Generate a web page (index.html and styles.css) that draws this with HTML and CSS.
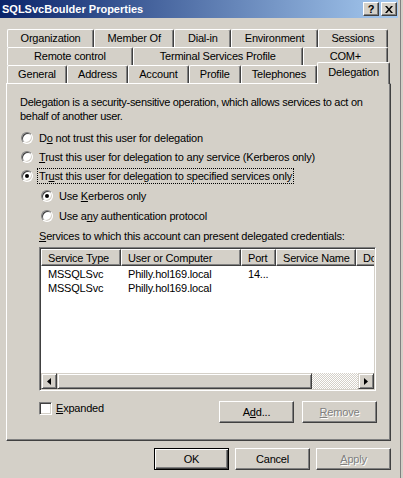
FILE: index.html
```html
<!DOCTYPE html>
<html lang="en">
<head>
    <meta charset="UTF-8">
    <title>SQLSvcBoulder Properties</title>
    <link rel="stylesheet" href="styles.css">
</head>
<body>
    <div class="window">
        <div class="titlebar">
            <span class="title">SQLSvcBoulder Properties</span>
            <div class="caption-buttons">
                <span class="cap-btn">?</span>
                <span class="cap-btn">
                    <svg width="8" height="7" viewBox="0 0 8 7"><path d="M0 0h2l2 2.5 2-2.5h2l-3 3.5 3 3.5h-2l-2-2.5-2 2.5h-2l3-3.5z" fill="#000"/></svg>
                </span>
            </div>
        </div>

        <div class="dialog">
            <div class="tab-row">
                <div class="tab">Organization</div>
                <div class="tab">Member Of</div>
                <div class="tab">Dial-in</div>
                <div class="tab">Environment</div>
                <div class="tab">Sessions</div>
            </div>
            <div class="tab-row">
                <div class="tab">Remote control</div>
                <div class="tab">Terminal Services Profile</div>
                <div class="tab">COM+</div>
            </div>
            <div class="tab-row">
                <div class="tab">General</div>
                <div class="tab">Address</div>
                <div class="tab">Account</div>
                <div class="tab">Profile</div>
                <div class="tab">Telephones</div>
                <div class="tab active">Delegation</div>
            </div>

            <div class="panel">
                <p class="intro">Delegation is a security-sensitive operation, which allows services to act on behalf of another user.</p>

                <div class="option first">
                    <span class="radio"></span>
                    <span class="label">D<u>o</u> not trust this user for delegation</span>
                </div>
                <div class="option">
                    <span class="radio"></span>
                    <span class="label"><u>T</u>rust this user for delegation to any service (Kerberos only)</span>
                </div>
                <div class="option">
                    <span class="radio checked"></span>
                    <span class="label focus">Tr<u>u</u>st this user for delegation to specified services only</span>
                </div>
                <div class="option sub">
                    <span class="radio checked"></span>
                    <span class="label">Use <u>K</u>erberos only</span>
                </div>
                <div class="option sub">
                    <span class="radio"></span>
                    <span class="label">Use a<u>n</u>y authentication protocol</span>
                </div>

                <div class="services">
                    <div class="services-label"><u>S</u>ervices to which this account can present delegated credentials:</div>
                    <div class="listview">
                        <div class="lv-header">
                            <div class="col c1">Service Type</div>
                            <div class="col c2">User or Computer</div>
                            <div class="col c3">Port</div>
                            <div class="col c4">Service Name</div>
                            <div class="col c5">Dc</div>
                        </div>
                        <div class="lv-body">
                            <div class="lv-row">
                                <div class="cell c1">MSSQLSvc</div>
                                <div class="cell c2">Philly.hol169.local</div>
                                <div class="cell c3">14...</div>
                                <div class="cell c4"></div>
                            </div>
                            <div class="lv-row">
                                <div class="cell c1">MSSQLSvc</div>
                                <div class="cell c2">Philly.hol169.local</div>
                                <div class="cell c3"></div>
                                <div class="cell c4"></div>
                            </div>
                        </div>
                        <div class="hscroll">
                            <span class="sb-btn">
                                <svg width="4" height="7" viewBox="0 0 4 7"><path d="M4 0v7L0 3.5z" fill="#000"/></svg>
                            </span>
                            <span class="sb-thumb"></span>
                            <span class="sb-track"></span>
                            <span class="sb-btn">
                                <svg width="4" height="7" viewBox="0 0 4 7"><path d="M0 0v7l4-3.5z" fill="#000"/></svg>
                            </span>
                        </div>
                    </div>

                    <div class="services-footer">
                        <div class="check-row">
                            <span class="checkbox"></span>
                            <span><u>E</u>xpanded</span>
                        </div>
                        <div class="btn-group">
                            <button class="btn">A<u>d</u>d...</button>
                            <button class="btn disabled"><u>R</u>emove</button>
                        </div>
                    </div>
                </div>
            </div>

            <div class="dialog-buttons">
                <button class="btn default">OK</button>
                <button class="btn">Cancel</button>
                <button class="btn disabled"><u>A</u>pply</button>
            </div>
        </div>
    </div>
</body>
</html>
```

FILE: styles.css
```css
body {
    margin: 0;
    width: 403px;
    height: 478px;
    overflow: hidden;
    background: #d4d0c8;
    font-family: "Liberation Sans", Arial, sans-serif;
    font-size: 11px;
    color: #000;
}
.window {
    width: 400px;
    height: 478px;
    border-right: 1px solid #808080;
}
.titlebar {
    height: 18px;
    margin-right: 2px;
    display: flex;
    align-items: center;
    justify-content: space-between;
    background: linear-gradient(to right, #0a246a, #a6caf0);
}
.title {
    color: #fff;
    font-weight: bold;
    padding-left: 2px;
}
.caption-buttons {
    display: flex;
    gap: 2px;
    padding-right: 1px;
}
.cap-btn {
    width: 16px;
    height: 14px;
    box-sizing: border-box;
    display: flex;
    align-items: center;
    justify-content: center;
    background: #d4d0c8;
    border: 1px solid;
    border-color: #fff #404040 #404040 #fff;
    box-shadow: inset -1px -1px #808080;
    font-weight: bold;
    font-size: 11px;
}

.dialog {
    padding: 11px 0 0 6px;
    letter-spacing: -0.2px;
}
.tab-row {
    display: flex;
    width: 381px;
    margin-left: 1px;
    height: 18px;
}
.tab {
    flex: 1 1 auto;
    box-sizing: border-box;
    height: 18px;
    padding: 1px 6px 0;
    text-align: center;
    white-space: nowrap;
    border: 1px solid;
    border-bottom: none;
    border-color: #fff #404040 #fff #fff;
    border-radius: 2px 2px 0 0;
    box-shadow: inset -1px 0 #808080;
    line-height: 14px;
}
.tab.active {
    position: relative;
    z-index: 1;
    height: 22px;
    margin: -3px -2px 0 0;
    padding-top: 2px;
    background: #d4d0c8;
}

.panel {
    width: 385px;
    height: 358px;
    box-sizing: border-box;
    border: 1px solid;
    border-color: #fff #404040 #404040 #fff;
    box-shadow: inset -1px -1px #808080;
    padding: 11px 13px 0;
}
.intro {
    margin: 0 -4px 0 0;
    line-height: 14px;
    letter-spacing: -0.3px;
}
.option {
    display: flex;
    align-items: center;
    height: 16px;
    margin-top: 3px;
}
.option.first {
    margin-top: 7px;
}
.option.sub {
    margin-top: 4px;
    padding-left: 20px;
}
.radio {
    width: 12px;
    height: 12px;
    box-sizing: border-box;
    margin: 0 4px 0 1px;
    border-radius: 50%;
    background: #fff;
    border: 1px solid;
    border-color: #808080 #fff #fff #808080;
    box-shadow: inset 1px 1px #404040, inset -1px -1px #d4d0c8;
    display: flex;
    align-items: center;
    justify-content: center;
}
.radio.checked::after {
    content: "";
    width: 4px;
    height: 4px;
    border-radius: 50%;
    background: #000;
}
.label {
    padding: 0 1px;
    line-height: 14px;
    border: 1px solid transparent;
}
.label.focus {
    border: 1px dotted #000;
}

.services {
    padding-left: 19px;
}
.services-label {
    margin-top: 5px;
    line-height: 14px;
}
.listview {
    margin-top: 4px;
    width: 337px;
    height: 144px;
    box-sizing: border-box;
    display: flex;
    flex-direction: column;
    background: #fff;
    border: 1px solid;
    border-color: #808080 #fff #fff #808080;
    box-shadow: inset 1px 1px #404040, inset -1px -1px #d4d0c8;
    padding: 1px;
    overflow: hidden;
}
.lv-header {
    display: flex;
    height: 17px;
    flex-shrink: 0;
}
.col {
    box-sizing: border-box;
    height: 17px;
    padding: 2px 0 0 6px;
    line-height: 13px;
    white-space: nowrap;
    overflow: hidden;
    background: #d4d0c8;
    border: 1px solid;
    border-color: #fff #404040 #404040 #fff;
    box-shadow: inset -1px -1px #808080;
}
.c1 { width: 80px; }
.c2 { width: 120px; }
.c3 { width: 35px; }
.c4 { width: 80px; }
.c5 { flex: 1; border-right: none; box-shadow: inset 0 -1px #808080; }
.lv-body {
    flex: 1;
    padding-top: 1px;
}
.lv-row {
    display: flex;
    height: 14px;
    line-height: 14px;
}
.cell {
    padding-left: 7px;
    box-sizing: border-box;
    white-space: nowrap;
}
.hscroll {
    display: flex;
    height: 16px;
    flex-shrink: 0;
}
.sb-btn {
    width: 16px;
    height: 16px;
    box-sizing: border-box;
    display: flex;
    align-items: center;
    justify-content: center;
    background: #d4d0c8;
    border: 1px solid;
    border-color: #d4d0c8 #404040 #404040 #d4d0c8;
    box-shadow: inset 1px 1px #fff, inset -1px -1px #808080;
}
.sb-thumb {
    width: 255px;
    box-sizing: border-box;
    background: #d4d0c8;
    border: 1px solid;
    border-color: #d4d0c8 #404040 #404040 #d4d0c8;
    box-shadow: inset 1px 1px #fff, inset -1px -1px #808080;
}
.sb-track {
    flex: 1;
    background: repeating-conic-gradient(#fff 0 25%, #d4d0c8 0 50%) 0 0 / 2px 2px;
}

.services-footer {
    display: flex;
    justify-content: space-between;
    align-items: flex-start;
    width: 338px;
    margin-top: 10px;
}
.check-row {
    display: flex;
    align-items: center;
    gap: 4px;
    height: 14px;
}
.checkbox {
    width: 13px;
    height: 13px;
    box-sizing: border-box;
    background: #fff;
    border: 1px solid;
    border-color: #808080 #fff #fff #808080;
    box-shadow: inset 1px 1px #404040, inset -1px -1px #d4d0c8;
}
.btn-group {
    display: flex;
    gap: 8px;
}
.btn {
    width: 75px;
    height: 22px;
    box-sizing: border-box;
    padding: 0;
    font-family: inherit;
    font-size: 11px;
    letter-spacing: inherit;
    color: #000;
    background: #d4d0c8;
    border: 1px solid;
    border-color: #fff #404040 #404040 #fff;
    box-shadow: inset -1px -1px #808080;
    border-radius: 0;
}
.btn.default {
    border-color: #000;
    box-shadow: inset 1px 1px #fff, inset -1px -1px #404040, inset -2px -2px #808080;
}
.btn.disabled {
    color: #808080;
    text-shadow: 1px 1px #fff;
}
.dialog-buttons {
    display: flex;
    justify-content: flex-end;
    gap: 6px;
    width: 385px;
    margin-top: 7px;
}
```
